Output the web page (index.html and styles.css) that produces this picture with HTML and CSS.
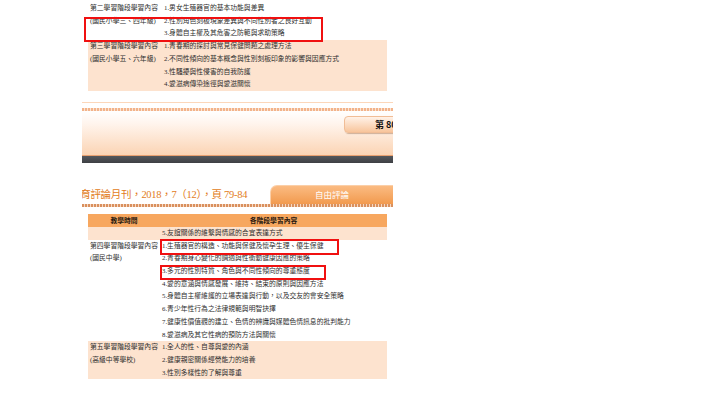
FILE: index.html
```html
<!DOCTYPE html>
<html>
<head>
    <meta charset="utf-8" />
    <title>性別平等教育 學習內容</title>
    <link rel="stylesheet" href="styles.css">
</head>
<body>
<div class="page">
    <table class="grid grid-top">
        <tr><td class="c1">第二學習階段學習內容</td><td>1.男女生殖器官的基本功能與差異</td></tr>
        <tr><td class="c1">(國民小學三、四年級)</td><td>2.性別角色刻板現象差異與不同性別者之良好互動</td></tr>
        <tr><td class="c1"></td><td>3.身體自主權及其危害之防範與求助策略</td></tr>
        <tr class="peach"><td class="c1">第三學習階段學習內容</td><td>1.青春期的探討與常見保健問題之處理方法</td></tr>
        <tr class="peach"><td class="c1">(國民小學五、六年級)</td><td>2.不同性傾向的基本概念與性別刻板印象的影響與因應方式</td></tr>
        <tr class="peach"><td class="c1"></td><td>3.性騷擾與性侵害的自我防護</td></tr>
        <tr class="peach"><td class="c1"></td><td>4.愛滋病傳染途徑與愛滋關懷</td></tr>
    </table>

    <div class="thinline"></div>
    <div class="zigzag"></div>
    <div class="banner">
        <div class="issue">第 80 期</div>
    </div>
    <div class="darkbar"></div>

    <div class="titlebar">
        <div class="cite">教育評論月刊，2018，7（12），頁 79-84</div>
        <div class="tab">自由評論</div>
    </div>
    <div class="zigzag zigzag-title"></div>

    <table class="grid grid-bottom">
        <tr class="head"><th class="c1">教學時間</th><th>各階段學習內容</th></tr>
        <tr class="peach"><td class="c1"></td><td>5.友誼關係的維繫與情感的合宜表達方式</td></tr>
        <tr><td class="c1">第四學習階段學習內容</td><td>1.生殖器官的構造、功能與保健及懷孕生理、優生保健</td></tr>
        <tr><td class="c1">(國民中學)</td><td>2.青春期身心變化的調適與性衝動健康因應的策略</td></tr>
        <tr><td class="c1"></td><td>3.多元的性別特質、角色與不同性傾向的尊重態度</td></tr>
        <tr><td class="c1"></td><td>4.愛的意涵與情感發展、維持、結束的原則與因應方法</td></tr>
        <tr><td class="c1"></td><td>5.身體自主權維護的立場表達與行動，以及交友的會安全策略</td></tr>
        <tr><td class="c1"></td><td>6.青少年性行為之法律規範與明智抉擇</td></tr>
        <tr><td class="c1"></td><td>7.健康性價值觀的建立、色情的辨識與媒體色情訊息的批判能力</td></tr>
        <tr><td class="c1"></td><td>8.愛滋病及其它性病的預防方法與關懷</td></tr>
        <tr class="peach"><td class="c1">第五學習階段學習內容</td><td>1.全人的性、自尊與愛的內涵</td></tr>
        <tr class="peach"><td class="c1">(高級中等學校)</td><td>2.健康親密關係經營能力的培養</td></tr>
        <tr class="peach"><td class="c1"></td><td>3.性別多樣性的了解與尊重</td></tr>
    </table>

    <!-- 紅框標示 -->
    <div class="mark mark1"></div>
    <div class="mark mark2"></div>
    <div class="mark mark3"></div>
</div>
</body>
</html>
```

FILE: styles.css
```css
*{ margin:0; padding:0 }
body{
    background:#fff;
    font-family:"Liberation Serif","Noto Sans CJK TC",serif;
    color:#2e2e2e;
}
.page{
    width:311px;
    margin-left:82px;
    position:relative;
    overflow:hidden;
    height:401px;
}

/* 表格 */
.grid{
    border-collapse:collapse;
    width:299px;
    margin-left:6px;
    font-size:6.8px;
    table-layout:fixed;
}
.grid td, .grid th{
    height:12.7px; line-height:12.7px;
    padding:0 0 0 2px;
    white-space:nowrap;
    overflow:visible;
    text-align:left;
    vertical-align:middle;
    font-weight:normal;
}
.grid .c1{ width:72px; padding-left:2px }
.grid-top{ margin-top:2px }
.peach td{ background:#fde3cf }
.grid .head th{
    background:#f7a75f;
    height:13px; line-height:13px;
    font-weight:bold; color:#2a1a10;
    text-align:center;
    padding:0;
}

/* 期數列 */
.thinline{
    height:1px; background:#fcd7ba;
    margin-top:11px;
}
.zigzag{
    height:3px; margin-top:5px;
    background:repeating-linear-gradient(90deg,#f2b38a 0,#f2b38a 2px,#fbe3d3 2px,#fbe3d3 3px);
}
.banner{
    height:44px;
    background:linear-gradient(#fff 0%,#fff4ec 30%,#fbd4b4 100%);
    display:flex; justify-content:flex-end;
    padding-top:5px;
    box-sizing:border-box;
}
.issue{
    width:60px; height:17px;
    margin-right:-11px;
    box-sizing:border-box;
    border:1px solid #f1bd96;
    border-radius:4px;
    background:linear-gradient(#fff2e8,#f8c59c);
    box-shadow:1px 1px 1px rgba(120,70,30,0.35);
    font-family:"Noto Sans CJK TC",sans-serif;
    font-size:9px; line-height:15px; font-weight:bold;
    color:#111;
    padding-left:30px;
    white-space:nowrap; overflow:hidden;
}
.darkbar{
    height:7px;
    border-top:1px solid #e8a070;
    background:linear-gradient(#55575b,#3e4044);
}

/* 標題列 */
.titlebar{
    margin-top:22px;
    height:19px;
    display:flex; justify-content:space-between; align-items:flex-end;
}
.cite{
    font-size:10.5px; line-height:19px;
    letter-spacing:-0.3px;
    color:#e27c22;
    margin-left:-12px;
    white-space:nowrap;
    padding-top:3px;
}
.tab{
    width:123px; height:19px;
    border-top-left-radius:7px;
    border-left:1px solid #fbcfa8;
    border-top:1px solid #fbcfa8;
    box-sizing:border-box;
    background:linear-gradient(#fbbb82,#f29a4e);
    color:#fff;
    font-family:"Noto Sans CJK TC",sans-serif;
    font-size:8.5px; line-height:17px;
    text-align:center;
}
.zigzag-title{
    margin-top:0;
    background:repeating-linear-gradient(90deg,#d9905e 0,#d9905e 2px,#f6d9c4 2px,#f6d9c4 3px);
}
.grid-bottom{ margin-top:7px }

/* 紅框 */
.mark{
    position:absolute;
    border:2px solid #f01010;
    box-sizing:border-box;
}
.mark1{ left:2px; top:17px; width:239px; height:25px }
.mark2{ left:78px; top:239px; width:179px; height:16px }
.mark3{ left:78px; top:265px; width:166px; height:15px }
```
